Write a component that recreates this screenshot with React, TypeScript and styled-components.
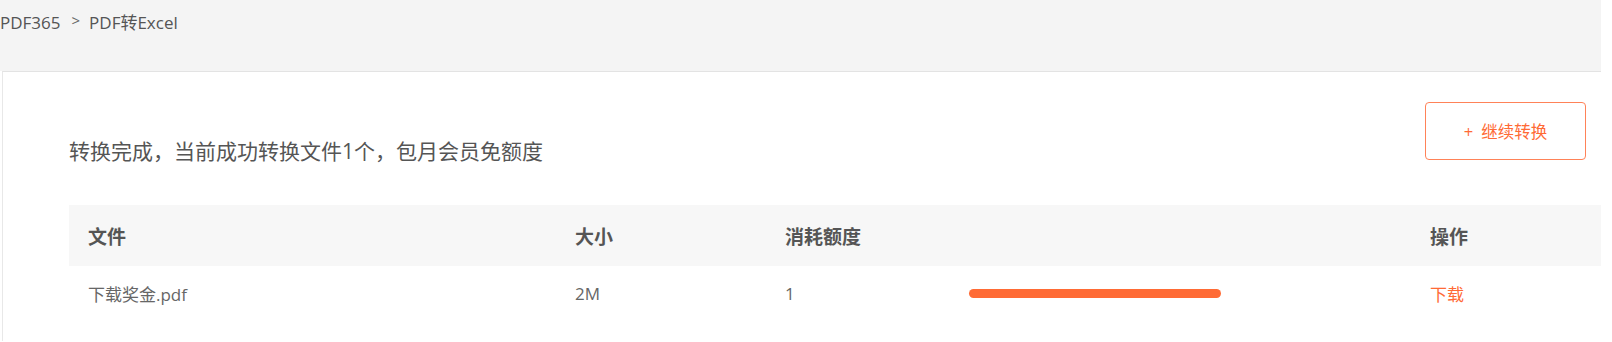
import React from 'react'
import styled, { createGlobalStyle } from 'styled-components'

const GlobalStyle = createGlobalStyle`
  html, body {
    margin: 0;
    padding: 0;
    background: #fff;
  }
  body {
    font-family: 'Open Sans', 'Noto Sans CJK SC', sans-serif;
    color: #666;
  }
`

const ORANGE = '#ff6a35'

const Page = styled.div`
  width: 1601px;
  display: flex;
  flex-direction: column;
`

const TopBar = styled.div`
  height: 71px;
  background: #f4f4f4;
  display: flex;
  align-items: flex-start;
  padding-top: 11px;
  box-sizing: border-box;
`

const Crumb = styled.span`
  font-size: 17px;
  line-height: 24px;
  color: #555;
`

const CrumbSep = styled.span`
  font-size: 15px;
  line-height: 24px;
  color: #666;
  margin: 0 9px 0 11px;
  position: relative;
  top: -3px;
`

const Card = styled.div`
  background: #fff;
  border-top: 1px solid #e3e3e3;
  border-left: 1px solid #e8e8e8;
  margin-left: 2px;
  padding: 30px 0 20px 66px;
  min-height: 270px;
  box-sizing: border-box;
`

const Summary = styled.div`
  display: flex;
  justify-content: space-between;
  align-items: flex-start;
  padding-right: 15px;
`

const SummaryText = styled.div`
  font-size: 21px;
  line-height: 30px;
  color: #555;
  margin-top: 34px;
`

const GoButton = styled.button`
  width: 161px;
  height: 58px;
  box-sizing: border-box;
  border: 1px solid #ff8258;
  border-radius: 4px;
  background: #fff;
  color: ${ORANGE};
  font-family: inherit;
  font-size: 16.5px;
  cursor: pointer;
  display: flex;
  align-items: center;
  justify-content: center;
  gap: 8px;
`

const Table = styled.div`
  margin-top: 39px;
  margin-left: 0;
`

const cols = '487px 210px 183px 462px 1fr'

const HeadRow = styled.div`
  display: grid;
  grid-template-columns: ${cols};
  height: 61px;
  align-items: center;
  background: #f7f7f7;
`

const BodyRow = styled.div`
  display: grid;
  grid-template-columns: ${cols};
  height: 54px;
  align-items: center;
`

const HeadCell = styled.div`
  padding-left: 19px;
  font-size: 19px;
  font-weight: 700;
  color: #555;
`

const Cell = styled.div<{ $accent?: boolean }>`
  padding-left: 19px;
  font-size: 17px;
  color: ${p => (p.$accent ? ORANGE : '#666')};
  cursor: ${p => (p.$accent ? 'pointer' : 'default')};
`

const Track = styled.div`
  margin-left: 20px;
  width: 252px;
  height: 9px;
  border-radius: 5px;
  background: #ff6b35;
`

export default function App() {
  const file = { name: '下载奖金.pdf', size: '2M', cost: 1, progress: 100 }

  return (
    <Page>
      <GlobalStyle />
      <TopBar>
        <Crumb>PDF365</Crumb>
        <CrumbSep>&gt;</CrumbSep>
        <Crumb>PDF转Excel</Crumb>
      </TopBar>
      <Card>
        <Summary>
          <SummaryText>转换完成，当前成功转换文件1个，包月会员免额度</SummaryText>
          <GoButton>
            <span>+</span>
            <span>继续转换</span>
          </GoButton>
        </Summary>
        <Table>
          <HeadRow>
            <HeadCell>文件</HeadCell>
            <HeadCell>大小</HeadCell>
            <HeadCell>消耗额度</HeadCell>
            <HeadCell />
            <HeadCell>操作</HeadCell>
          </HeadRow>
          <BodyRow>
            <Cell>{file.name}</Cell>
            <Cell>{file.size}</Cell>
            <Cell>{file.cost}</Cell>
            <div>
              <Track style={{ width: `${(252 * file.progress) / 100}px` }} />
            </div>
            <Cell $accent>下载</Cell>
          </BodyRow>
        </Table>
      </Card>
    </Page>
  )
}
